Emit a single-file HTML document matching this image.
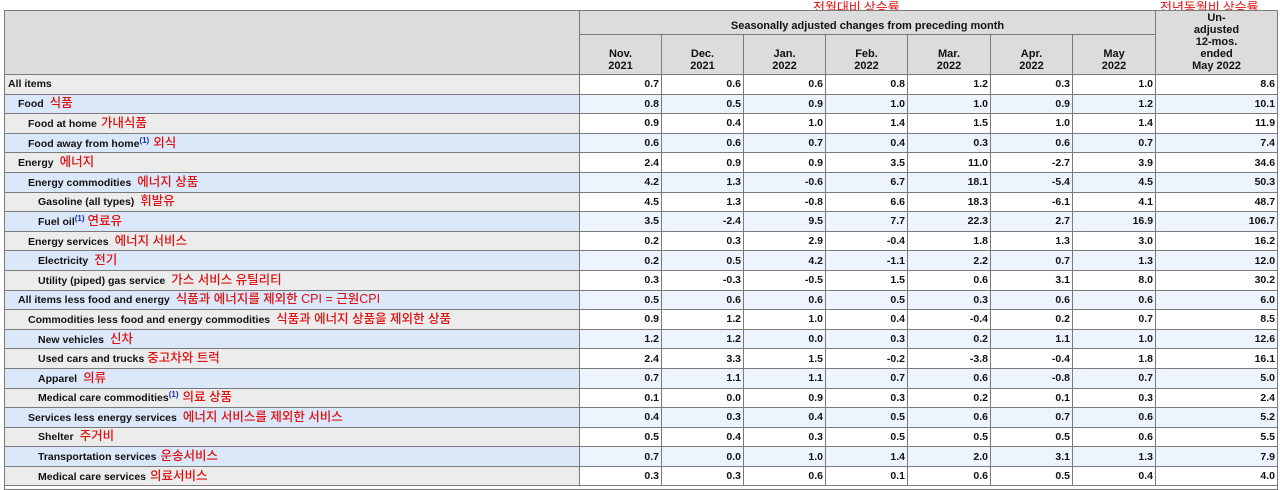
<!DOCTYPE html>
<html><head><meta charset="utf-8"><style>
body{margin:0;background:#fff;width:1280px;height:490px;overflow:hidden;position:relative;font-family:"Liberation Sans",Arial,sans-serif;}
table{position:absolute;left:4px;top:10px;border-collapse:collapse;table-layout:fixed;width:1273px;}
td,th{border:1px solid #7a7a7a;padding:0;font-size:10.5px;font-weight:bold;color:#111;overflow:hidden;white-space:nowrap;line-height:14px;}
th{background:#dcdcdc;text-align:center;line-height:12px;font-size:11px;}
tr.d{height:19.6px;}
tr.d td{text-align:right;padding-right:2px;background:#fff;}
tr.d td.l{text-align:left;background:#ececec;padding-right:0;}
tr.b td{background:#eef4fd;}
tr.b td.l{background:#dbe8fa;}
.k{color:#e01010;font-family:"Liberation Sans","Noto Sans CJK KR",sans-serif;font-weight:500;font-size:12.5px;margin-left:6px;}
.f{color:#1030c0;font-size:8px;vertical-align:4px;line-height:0;}
.r{position:absolute;color:#e01010;font-family:"Noto Sans CJK KR",sans-serif;font-size:13px;top:-3px;}
</style></head><body>
<div class="r" style="left:813px">전월대비 상승률</div>
<div class="r" style="left:1160px">전년동월비 상승률</div>
<table>
<colgroup><col style="width:575px"><col style="width:82px"><col style="width:82px"><col style="width:82px"><col style="width:82px"><col style="width:83px"><col style="width:82px"><col style="width:83px"><col style="width:122px"></colgroup>
<tr style="height:24px"><th rowspan="2"></th><th colspan="7" style="vertical-align:bottom;padding-bottom:2px">Seasonally adjusted changes from preceding month</th><th rowspan="2" style="vertical-align:bottom;padding-bottom:2px">Un-<br>adjusted<br>12-mos.<br>ended<br>May 2022</th></tr>
<tr style="height:40px"><th style="vertical-align:bottom;padding-bottom:2px">Nov.<br>2021</th><th style="vertical-align:bottom;padding-bottom:2px">Dec.<br>2021</th><th style="vertical-align:bottom;padding-bottom:2px">Jan.<br>2022</th><th style="vertical-align:bottom;padding-bottom:2px">Feb.<br>2022</th><th style="vertical-align:bottom;padding-bottom:2px">Mar.<br>2022</th><th style="vertical-align:bottom;padding-bottom:2px">Apr.<br>2022</th><th style="vertical-align:bottom;padding-bottom:2px">May<br>2022</th></tr>
<tr class="d"><td class="l" style="padding-left:3px">All items</td><td>0.7</td><td>0.6</td><td>0.6</td><td>0.8</td><td>1.2</td><td>0.3</td><td>1.0</td><td>8.6</td></tr>
<tr class="d b"><td class="l" style="padding-left:13px">Food<span class="k">식품</span></td><td>0.8</td><td>0.5</td><td>0.9</td><td>1.0</td><td>1.0</td><td>0.9</td><td>1.2</td><td>10.1</td></tr>
<tr class="d"><td class="l" style="padding-left:23px">Food at home<span class="k" style="margin-left:4px">가내식품</span></td><td>0.9</td><td>0.4</td><td>1.0</td><td>1.4</td><td>1.5</td><td>1.0</td><td>1.4</td><td>11.9</td></tr>
<tr class="d b"><td class="l" style="padding-left:23px">Food away from home<span class="f">(1)</span><span class="k" style="margin-left:4px">외식</span></td><td>0.6</td><td>0.6</td><td>0.7</td><td>0.4</td><td>0.3</td><td>0.6</td><td>0.7</td><td>7.4</td></tr>
<tr class="d"><td class="l" style="padding-left:13px">Energy<span class="k">에너지</span></td><td>2.4</td><td>0.9</td><td>0.9</td><td>3.5</td><td>11.0</td><td>-2.7</td><td>3.9</td><td>34.6</td></tr>
<tr class="d b"><td class="l" style="padding-left:23px">Energy commodities<span class="k">에너지 상품</span></td><td>4.2</td><td>1.3</td><td>-0.6</td><td>6.7</td><td>18.1</td><td>-5.4</td><td>4.5</td><td>50.3</td></tr>
<tr class="d"><td class="l" style="padding-left:33px">Gasoline (all types)<span class="k">휘발유</span></td><td>4.5</td><td>1.3</td><td>-0.8</td><td>6.6</td><td>18.3</td><td>-6.1</td><td>4.1</td><td>48.7</td></tr>
<tr class="d b"><td class="l" style="padding-left:33px">Fuel oil<span class="f">(1)</span><span class="k" style="margin-left:3px">연료유</span></td><td>3.5</td><td>-2.4</td><td>9.5</td><td>7.7</td><td>22.3</td><td>2.7</td><td>16.9</td><td>106.7</td></tr>
<tr class="d"><td class="l" style="padding-left:23px">Energy services<span class="k">에너지 서비스</span></td><td>0.2</td><td>0.3</td><td>2.9</td><td>-0.4</td><td>1.8</td><td>1.3</td><td>3.0</td><td>16.2</td></tr>
<tr class="d b"><td class="l" style="padding-left:33px">Electricity<span class="k">전기</span></td><td>0.2</td><td>0.5</td><td>4.2</td><td>-1.1</td><td>2.2</td><td>0.7</td><td>1.3</td><td>12.0</td></tr>
<tr class="d"><td class="l" style="padding-left:33px">Utility (piped) gas service<span class="k">가스 서비스 유틸리티</span></td><td>0.3</td><td>-0.3</td><td>-0.5</td><td>1.5</td><td>0.6</td><td>3.1</td><td>8.0</td><td>30.2</td></tr>
<tr class="d b"><td class="l" style="padding-left:13px">All items less food and energy<span class="k">식품과 에너지를 제외한 CPI = 근원CPI</span></td><td>0.5</td><td>0.6</td><td>0.6</td><td>0.5</td><td>0.3</td><td>0.6</td><td>0.6</td><td>6.0</td></tr>
<tr class="d"><td class="l" style="padding-left:23px">Commodities less food and energy commodities<span class="k">식품과 에너지 상품을 제외한 상품</span></td><td>0.9</td><td>1.2</td><td>1.0</td><td>0.4</td><td>-0.4</td><td>0.2</td><td>0.7</td><td>8.5</td></tr>
<tr class="d b"><td class="l" style="padding-left:33px">New vehicles<span class="k">신차</span></td><td>1.2</td><td>1.2</td><td>0.0</td><td>0.3</td><td>0.2</td><td>1.1</td><td>1.0</td><td>12.6</td></tr>
<tr class="d"><td class="l" style="padding-left:33px">Used cars and trucks<span class="k" style="margin-left:3px">중고차와 트럭</span></td><td>2.4</td><td>3.3</td><td>1.5</td><td>-0.2</td><td>-3.8</td><td>-0.4</td><td>1.8</td><td>16.1</td></tr>
<tr class="d b"><td class="l" style="padding-left:33px">Apparel<span class="k">의류</span></td><td>0.7</td><td>1.1</td><td>1.1</td><td>0.7</td><td>0.6</td><td>-0.8</td><td>0.7</td><td>5.0</td></tr>
<tr class="d"><td class="l" style="padding-left:33px">Medical care commodities<span class="f">(1)</span><span class="k" style="margin-left:4px">의료 상품</span></td><td>0.1</td><td>0.0</td><td>0.9</td><td>0.3</td><td>0.2</td><td>0.1</td><td>0.3</td><td>2.4</td></tr>
<tr class="d b"><td class="l" style="padding-left:23px">Services less energy services<span class="k">에너지 서비스를 제외한 서비스</span></td><td>0.4</td><td>0.3</td><td>0.4</td><td>0.5</td><td>0.6</td><td>0.7</td><td>0.6</td><td>5.2</td></tr>
<tr class="d"><td class="l" style="padding-left:33px">Shelter<span class="k">주거비</span></td><td>0.5</td><td>0.4</td><td>0.3</td><td>0.5</td><td>0.5</td><td>0.5</td><td>0.6</td><td>5.5</td></tr>
<tr class="d b"><td class="l" style="padding-left:33px">Transportation services<span class="k" style="margin-left:4px">운송서비스</span></td><td>0.7</td><td>0.0</td><td>1.0</td><td>1.4</td><td>2.0</td><td>3.1</td><td>1.3</td><td>7.9</td></tr>
<tr class="d"><td class="l" style="padding-left:33px">Medical care services<span class="k" style="margin-left:4px">의료서비스</span></td><td>0.3</td><td>0.3</td><td>0.6</td><td>0.1</td><td>0.6</td><td>0.5</td><td>0.4</td><td>4.0</td></tr>
<tr style="height:4px"><td colspan="9" style="background:#fff"></td></tr>
</table>
</body></html>
